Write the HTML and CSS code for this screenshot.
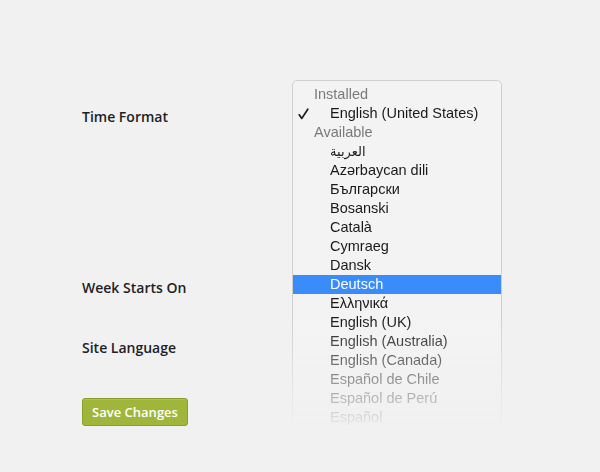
FILE: index.html
```html
<!DOCTYPE html>
<html>
<head>
<meta charset="utf-8">
<link rel="stylesheet" href="styles.css">
</head>
<body>
<div class="page">
  <div class="row row-time"><span class="label">Time Format</span></div>
  <div class="row row-week"><span class="label">Week Starts On</span></div>
  <div class="row row-lang"><span class="label">Site Language</span></div>
  <button class="save">Save Changes</button>
</div>
<div class="menu">
  <div class="group">Installed</div>
  <div class="item checked"><svg class="check" width="11" height="12" viewBox="0 0 11 12"><path d="M1.2 6.8 L3.8 10.4 L9.8 1.2" fill="none" stroke="#1a1a1a" stroke-width="1.7" stroke-linecap="round" stroke-linejoin="round"/></svg>English (United States)</div>
  <div class="group">Available</div>
  <div class="item arabic">العربية</div>
  <div class="item">Azərbaycan dili</div>
  <div class="item">Български</div>
  <div class="item">Bosanski</div>
  <div class="item">Català</div>
  <div class="item">Cymraeg</div>
  <div class="item">Dansk</div>
  <div class="item active">Deutsch</div>
  <div class="item">Ελληνικά</div>
  <div class="item">English (UK)</div>
  <div class="item">English (Australia)</div>
  <div class="item">English (Canada)</div>
  <div class="item">Español de Chile</div>
  <div class="item">Español de Perú</div>
  <div class="item">Español</div>
  <div class="item">Español de México</div>
</div>
</body>
</html>
```
FILE: styles.css
```css
html, body {
  margin: 0;
  padding: 0;
  background: #f1f1f1;
  height: 100%;
  overflow: hidden;
}
.page {
  padding: 107px 0 0 82px;
  font-family: "Open Sans", sans-serif;
}
.row {
  display: flex;
  align-items: flex-start;
}
.row-time { height: 171px; }
.row-week { height: 60px; }
.row-lang { height: 60px; }
.label {
  font-size: 14px;
  line-height: 20px;
  font-weight: 600;
  color: #1d2126;
}
.save {
  display: block;
  margin: 0;
  width: 106px;
  height: 28px;
  padding: 0;
  background: #a0b63a;
  border: 1px solid #8a9e2c;
  border-radius: 3px;
  color: #fff;
  font-family: "Open Sans", sans-serif;
  font-weight: 600;
  font-size: 13px;
  line-height: 26px;
  box-shadow: inset 0 1px 0 rgba(255,255,255,0.15);
}
.menu {
  position: absolute;
  left: 292px;
  top: 80px;
  width: 210px;
  height: 370px;
  box-sizing: border-box;
  padding-top: 4px;
  background: #f3f3f3;
  border: 1px solid #d0d0d0;
  border-radius: 5px;
  box-shadow: 0 3px 10px rgba(0,0,0,0.18);
  font-family: "Liberation Sans", Arial, sans-serif;
  font-size: 14.5px;
  color: #1a1a1a;
  -webkit-mask-image: linear-gradient(to bottom, #000 0, #000 240px, rgba(0,0,0,0.3) 315px, rgba(0,0,0,0) 350px);
  mask-image: linear-gradient(to bottom, #000 0, #000 240px, rgba(0,0,0,0.3) 315px, rgba(0,0,0,0) 350px);
}
.group {
  height: 19px;
  line-height: 19px;
  padding-left: 21px;
  color: #7a7a7a;
}
.item {
  position: relative;
  height: 19px;
  line-height: 19px;
  padding-left: 37px;
  white-space: nowrap;
}
.arabic {
  font-family: "DejaVu Sans", sans-serif;
  font-size: 13px;
}
.check {
  position: absolute;
  left: 5px;
  top: 4px;
}
.active {
  background: #3a8cfb;
  color: #fff;
}
```
